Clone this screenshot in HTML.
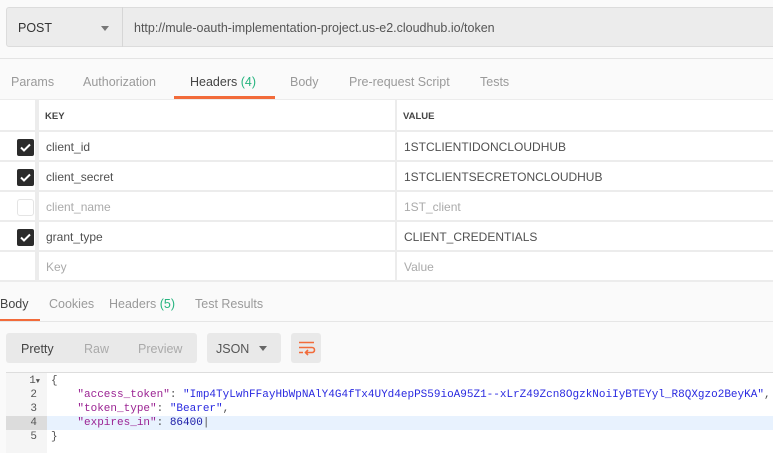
<!DOCTYPE html>
<html><head><meta charset="utf-8"><style>
*{box-sizing:border-box;margin:0;padding:0}
body{width:773px;height:453px;overflow:hidden;background:#fafafa;font-family:"Liberation Sans",sans-serif;font-size:12px;color:#505050;position:relative}
.abs{position:absolute}
.urlbar{left:6px;top:7px;width:780px;height:40px;background:#ececec;border:1px solid #dcdcdc;border-radius:3px}
.method{left:6px;top:7px;width:117px;height:40px;border-right:1px solid #d6d6d6}
.tabs span{position:absolute;top:75px;color:#9a9a9a;font-size:12.5px}
.cell{position:absolute;background:#fff}
.cb{position:absolute;left:17px;width:17px;height:17px;border-radius:2px;background:#2b2b2b}
.cb svg{position:absolute;left:2px;top:3px}
.code{font-family:"Liberation Mono",monospace;font-size:11px;position:absolute;left:51px;white-space:pre}
.ln{font-family:"Liberation Mono",monospace;font-size:11px;position:absolute;left:0;width:38px;text-align:right;color:#555}
.k{color:#9b2393}
.s{color:#2a2ae0}
.n{color:#1a1aa6}
</style></head><body>
<div class="abs urlbar"></div>
<div class="abs method"></div>
<div class="abs" style="left:18px;top:21px;font-size:12.5px;color:#333">POST</div>
<div class="abs" style="left:101px;top:26px;width:0;height:0;border-left:4px solid transparent;border-right:4px solid transparent;border-top:5px solid #777"></div>
<div class="abs" style="left:134px;top:21px;font-size:12.5px;color:#555">http://mule-oauth-implementation-project.us-e2.cloudhub.io/token</div>
<div class="abs" style="left:0;top:58px;width:773px;height:1px;background:#e4e4e4"></div>
<div class="tabs">
<span style="left:11px">Params</span><span style="left:83px">Authorization</span>
<span style="left:190px;color:#444">Headers <b style="font-weight:normal;color:#26b47f">(4)</b></span>
<span style="left:290px">Body</span><span style="left:349px">Pre-request Script</span><span style="left:480px">Tests</span>
</div>
<div class="abs" style="left:174px;top:96px;width:101px;height:3px;background:#f26b3a"></div>
<div class="abs" style="left:0;top:99px;width:773px;height:183px;background:#ececec"></div>
<div class="cell" style="left:0;top:100px;width:35px;height:30px"></div>
<div class="cell" style="left:39px;top:100px;width:356px;height:30px"></div>
<div class="cell" style="left:397px;top:100px;width:376px;height:30px"></div>
<div class="abs" style="left:45px;top:111px;font-size:9.5px;font-weight:bold;color:#444">KEY</div>
<div class="abs" style="left:403px;top:111px;font-size:9.5px;font-weight:bold;color:#444">VALUE</div>

<div class="cell" style="left:0;top:132px;width:35px;height:28px"></div><div class="cell" style="left:39px;top:132px;width:356px;height:28px"></div><div class="cell" style="left:397px;top:132px;width:376px;height:28px"></div>
<div class="cell" style="left:0;top:162px;width:35px;height:28px"></div><div class="cell" style="left:39px;top:162px;width:356px;height:28px"></div><div class="cell" style="left:397px;top:162px;width:376px;height:28px"></div>
<div class="cell" style="left:0;top:192px;width:35px;height:28px"></div><div class="cell" style="left:39px;top:192px;width:356px;height:28px"></div><div class="cell" style="left:397px;top:192px;width:376px;height:28px"></div>
<div class="cell" style="left:0;top:222px;width:35px;height:28px"></div><div class="cell" style="left:39px;top:222px;width:356px;height:28px"></div><div class="cell" style="left:397px;top:222px;width:376px;height:28px"></div>
<div class="cell" style="left:0;top:252px;width:35px;height:28px"></div><div class="cell" style="left:39px;top:252px;width:356px;height:28px"></div><div class="cell" style="left:397px;top:252px;width:376px;height:28px"></div>

<div class="cb" style="top:139px"><svg width="13" height="11"><path d="M2 5.5l3 3 6-6" stroke="#fff" stroke-width="2" fill="none"/></svg></div>
<div class="cb" style="top:169px"><svg width="13" height="11"><path d="M2 5.5l3 3 6-6" stroke="#fff" stroke-width="2" fill="none"/></svg></div>
<div class="abs" style="left:17px;top:199px;width:17px;height:17px;border:1px solid #e4e4e4;border-radius:3px"></div>
<div class="cb" style="top:229px"><svg width="13" height="11"><path d="M2 5.5l3 3 6-6" stroke="#fff" stroke-width="2" fill="none"/></svg></div>

<div class="abs" style="left:46px;top:140px">client_id</div><div class="abs" style="left:404px;top:140px">1STCLIENTIDONCLOUDHUB</div>
<div class="abs" style="left:46px;top:170px">client_secret</div><div class="abs" style="left:404px;top:170px">1STCLIENTSECRETONCLOUDHUB</div>
<div class="abs" style="left:46px;top:200px;color:#aaa">client_name</div><div class="abs" style="left:404px;top:200px;color:#aaa">1ST_client</div>
<div class="abs" style="left:46px;top:230px">grant_type</div><div class="abs" style="left:404px;top:230px">CLIENT_CREDENTIALS</div>
<div class="abs" style="left:46px;top:260px;color:#aaa">Key</div><div class="abs" style="left:404px;top:260px;color:#aaa">Value</div>

<div class="abs" style="left:0;top:297px;font-size:12.5px;color:#444">Body</div>
<div class="abs" style="left:49px;top:297px;font-size:12.5px;color:#9a9a9a">Cookies</div>
<div class="abs" style="left:109px;top:297px;font-size:12.5px;color:#9a9a9a">Headers <span style="color:#26b47f">(5)</span></div>
<div class="abs" style="left:195px;top:297px;font-size:12.5px;color:#9a9a9a">Test Results</div>
<div class="abs" style="left:0;top:319px;width:40px;height:3px;background:#f26b3a"></div>
<div class="abs" style="left:0;top:321px;width:773px;height:1px;background:#e6e6e6"></div>

<div class="abs" style="left:6px;top:333px;width:191px;height:30px;background:#e9e9e9;border-radius:3px"></div>
<div class="abs" style="left:21px;top:342px;font-size:12.5px;color:#444">Pretty</div>
<div class="abs" style="left:84px;top:342px;font-size:12.5px;color:#aaa">Raw</div>
<div class="abs" style="left:138px;top:342px;font-size:12.5px;color:#aaa">Preview</div>
<div class="abs" style="left:207px;top:333px;width:74px;height:30px;background:#e9e9e9;border-radius:3px"></div>
<div class="abs" style="left:216px;top:342px;font-size:12.5px;color:#555">JSON</div>
<div class="abs" style="left:259px;top:346px;width:0;height:0;border-left:4px solid transparent;border-right:4px solid transparent;border-top:5px solid #666"></div>
<div class="abs" style="left:291px;top:333px;width:30px;height:30px;background:#e9e9e9;border-radius:3px"></div>
<svg class="abs" style="left:297px;top:340px" width="20" height="16"><path d="M2 2.5h15M2 7.5h13a2.5 2.5 0 0 1 0 5h-6M11 10l-2.5 2.5 2.5 2.5M2 12.5h4" stroke="#f26b3a" stroke-width="1.6" fill="none"/></svg>

<div class="abs" style="left:6px;top:372px;width:767px;height:81px;background:#fff;border-top:1px solid #ddd"></div>
<div class="abs" style="left:6px;top:373px;width:41px;height:80px;background:#f5f5f5"></div>
<div class="abs" style="left:47px;top:416px;width:726px;height:14px;background:#e8f2fe"></div>
<div class="abs" style="left:6px;top:416px;width:41px;height:14px;background:#dcdcdc"></div>
<div class="ln" style="top:375px;width:40px">1<span style="font-size:7px">▼</span></div><div class="ln" style="top:389px;width:37px">2</div><div class="ln" style="top:403px;width:37px">3</div><div class="ln" style="top:417px;width:37px">4</div><div class="ln" style="top:431px;width:37px">5</div>
<div class="code" style="top:375px">{</div>
<div class="code" style="top:389px">    <span class="k">"access_token"</span>: <span class="s">"Imp4TyLwhFFayHbWpNAlY4G4fTx4UYd4epPS59ioA95Z1--xLrZ49Zcn8OgzkNoiIyBTEYyl_R8QXgzo2BeyKA"</span>,</div>
<div class="code" style="top:403px">    <span class="k">"token_type"</span>: <span class="s">"Bearer"</span>,</div>
<div class="code" style="top:417px">    <span class="k">"expires_in"</span>: <span class="n">86400</span>|</div>
<div class="code" style="top:431px">}</div>
</body></html>
